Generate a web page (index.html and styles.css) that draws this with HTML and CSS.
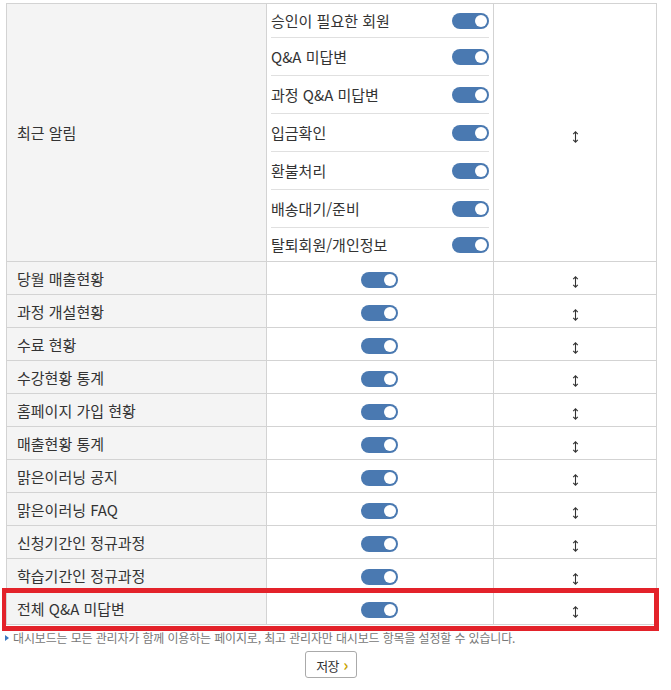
FILE: index.html
```html
<!DOCTYPE html>
<html lang="ko">
<head>
<meta charset="utf-8">
<title>대시보드 설정</title>
<link rel="stylesheet" href="styles.css">
</head>
<body>
<div class="wrap">
  <table class="dash">
    <colgroup>
      <col class="c1"><col class="c2"><col class="c3">
    </colgroup>
    <tbody>
      <tr>
        <th>최근 알림</th>
        <td class="sub">
          <ul class="sublist">
            <li><span>승인이 필요한 회원</span><span class="toggle"></span></li>
            <li><span>Q&amp;A 미답변</span><span class="toggle"></span></li>
            <li><span>과정 Q&amp;A 미답변</span><span class="toggle"></span></li>
            <li><span>입금확인</span><span class="toggle"></span></li>
            <li><span>환불처리</span><span class="toggle"></span></li>
            <li><span>배송대기/준비</span><span class="toggle"></span></li>
            <li><span>탈퇴회원/개인정보</span><span class="toggle"></span></li>
          </ul>
        </td>
        <td class="order"><svg class="arr" width="7" height="12" viewBox="0 0 7 12"><path d="M3.5 0.8V11.2M1.2 3.1L3.5 0.8L5.8 3.1M1.2 8.9L3.5 11.2L5.8 8.9" fill="none" stroke="#333" stroke-width="1.1"/></svg></td>
      </tr>
      <tr><th>당월 매출현황</th><td class="sw"><span class="toggle"></span></td><td class="order"><svg class="arr" width="7" height="12" viewBox="0 0 7 12"><path d="M3.5 0.8V11.2M1.2 3.1L3.5 0.8L5.8 3.1M1.2 8.9L3.5 11.2L5.8 8.9" fill="none" stroke="#333" stroke-width="1.1"/></svg></td></tr>
      <tr><th>과정 개설현황</th><td class="sw"><span class="toggle"></span></td><td class="order"><svg class="arr" width="7" height="12" viewBox="0 0 7 12"><path d="M3.5 0.8V11.2M1.2 3.1L3.5 0.8L5.8 3.1M1.2 8.9L3.5 11.2L5.8 8.9" fill="none" stroke="#333" stroke-width="1.1"/></svg></td></tr>
      <tr><th>수료 현황</th><td class="sw"><span class="toggle"></span></td><td class="order"><svg class="arr" width="7" height="12" viewBox="0 0 7 12"><path d="M3.5 0.8V11.2M1.2 3.1L3.5 0.8L5.8 3.1M1.2 8.9L3.5 11.2L5.8 8.9" fill="none" stroke="#333" stroke-width="1.1"/></svg></td></tr>
      <tr><th>수강현황 통계</th><td class="sw"><span class="toggle"></span></td><td class="order"><svg class="arr" width="7" height="12" viewBox="0 0 7 12"><path d="M3.5 0.8V11.2M1.2 3.1L3.5 0.8L5.8 3.1M1.2 8.9L3.5 11.2L5.8 8.9" fill="none" stroke="#333" stroke-width="1.1"/></svg></td></tr>
      <tr><th>홈페이지 가입 현황</th><td class="sw"><span class="toggle"></span></td><td class="order"><svg class="arr" width="7" height="12" viewBox="0 0 7 12"><path d="M3.5 0.8V11.2M1.2 3.1L3.5 0.8L5.8 3.1M1.2 8.9L3.5 11.2L5.8 8.9" fill="none" stroke="#333" stroke-width="1.1"/></svg></td></tr>
      <tr><th>매출현황 통계</th><td class="sw"><span class="toggle"></span></td><td class="order"><svg class="arr" width="7" height="12" viewBox="0 0 7 12"><path d="M3.5 0.8V11.2M1.2 3.1L3.5 0.8L5.8 3.1M1.2 8.9L3.5 11.2L5.8 8.9" fill="none" stroke="#333" stroke-width="1.1"/></svg></td></tr>
      <tr><th>맑은이러닝 공지</th><td class="sw"><span class="toggle"></span></td><td class="order"><svg class="arr" width="7" height="12" viewBox="0 0 7 12"><path d="M3.5 0.8V11.2M1.2 3.1L3.5 0.8L5.8 3.1M1.2 8.9L3.5 11.2L5.8 8.9" fill="none" stroke="#333" stroke-width="1.1"/></svg></td></tr>
      <tr><th>맑은이러닝 FAQ</th><td class="sw"><span class="toggle"></span></td><td class="order"><svg class="arr" width="7" height="12" viewBox="0 0 7 12"><path d="M3.5 0.8V11.2M1.2 3.1L3.5 0.8L5.8 3.1M1.2 8.9L3.5 11.2L5.8 8.9" fill="none" stroke="#333" stroke-width="1.1"/></svg></td></tr>
      <tr><th>신청기간인 정규과정</th><td class="sw"><span class="toggle"></span></td><td class="order"><svg class="arr" width="7" height="12" viewBox="0 0 7 12"><path d="M3.5 0.8V11.2M1.2 3.1L3.5 0.8L5.8 3.1M1.2 8.9L3.5 11.2L5.8 8.9" fill="none" stroke="#333" stroke-width="1.1"/></svg></td></tr>
      <tr><th>학습기간인 정규과정</th><td class="sw"><span class="toggle"></span></td><td class="order"><svg class="arr" width="7" height="12" viewBox="0 0 7 12"><path d="M3.5 0.8V11.2M1.2 3.1L3.5 0.8L5.8 3.1M1.2 8.9L3.5 11.2L5.8 8.9" fill="none" stroke="#333" stroke-width="1.1"/></svg></td></tr>
      <tr><th>전체 Q&amp;A 미답변</th><td class="sw"><span class="toggle"></span></td><td class="order"><svg class="arr" width="7" height="12" viewBox="0 0 7 12"><path d="M3.5 0.8V11.2M1.2 3.1L3.5 0.8L5.8 3.1M1.2 8.9L3.5 11.2L5.8 8.9" fill="none" stroke="#333" stroke-width="1.1"/></svg></td></tr>
    </tbody>
  </table>
  <div class="highlight"></div>
  <p class="note"><span class="mark"></span>대시보드는 모든 관리자가 함께 이용하는 페이지로, 최고 관리자만 대시보드 항목을 설정할 수 있습니다.</p>
  <div class="actions">
    <button class="btn" type="button">저장 <span class="chev">›</span></button>
  </div>
</div>
</body>
</html>
```

FILE: styles.css
```css
* { box-sizing: border-box; }

html, body {
  margin: 0;
  padding: 0;
  background: #fff;
}

body {
  font-family: "Noto Sans CJK KR", "Noto Sans", sans-serif;
  color: #333;
}

.wrap {
  position: relative;
  width: 650px;
  margin: 3px 0 0 6px;
}

.dash {
  width: 650px;
  border-collapse: collapse;
  table-layout: fixed;
  font-size: 15px;
}

.c1 { width: 260px; }
.c2 { width: 227px; }
.c3 { width: 163px; }

.dash th,
.dash td {
  border: 1px solid #d3d3d3;
  height: 33px;
  padding: 0;
  vertical-align: middle;
}

.dash th {
  background: #f4f4f4;
  font-weight: normal;
  text-align: left;
  padding-left: 10px;
  color: #333;
}

.dash td.sw,
.dash td.order {
  text-align: center;
}

.dash td.sub {
  padding: 0 4px 0 4px;
}

.sublist {
  list-style: none;
  margin: 0;
  padding: 0;
}

.sublist li {
  display: flex;
  align-items: center;
  justify-content: space-between;
  height: 38px;
  border-bottom: 1px solid #e0e0e0;
}

.sublist li:first-child { height: 34px; }
.sublist li:last-child { height: 33px; border-bottom: 0; }

.toggle {
  display: inline-block;
  position: relative;
  width: 37px;
  height: 16px;
  border-radius: 8px;
  background: #4a79b1;
  vertical-align: middle;
}

.dash td.sw .toggle { margin-left: -2px; }

.toggle::after {
  content: "";
  position: absolute;
  right: 2px;
  top: 2px;
  width: 12px;
  height: 12px;
  border-radius: 50%;
  background: #fff;
}

.arr {
  display: inline-block;
  vertical-align: middle;
  margin-top: 4px;
}

.highlight {
  position: absolute;
  left: -4px;
  top: 585px;
  width: 657px;
  height: 43px;
  border: 5px solid #e3222a;
  border-left-width: 4px;
  pointer-events: none;
}

.note {
  margin: 5px 0 0 -1px;
  font-size: 12px;
  letter-spacing: -0.15px;
  line-height: 16px;
  color: #777;
  display: flex;
  align-items: center;
}

.mark {
  display: inline-block;
  width: 0;
  height: 0;
  border-top: 3px solid transparent;
  border-bottom: 3px solid transparent;
  border-left: 4px solid #3b78c0;
  margin: 0 4px 0 0;
}

.actions {
  display: flex;
  justify-content: center;
  margin-top: 5px;
}

.btn {
  font-family: "Noto Sans CJK KR", "Noto Sans", sans-serif;
  font-size: 13px;
  letter-spacing: -0.5px;
  color: #333;
  background: #fff;
  border: 1px solid #aaa;
  border-radius: 3px;
  width: 52px;
  height: 27px;
  padding: 0 0 1px 2px;
  line-height: 1;
}

.chev {
  color: #c9a300;
  font-size: 16px;
  font-weight: bold;
  margin-left: 1px;
}
```
